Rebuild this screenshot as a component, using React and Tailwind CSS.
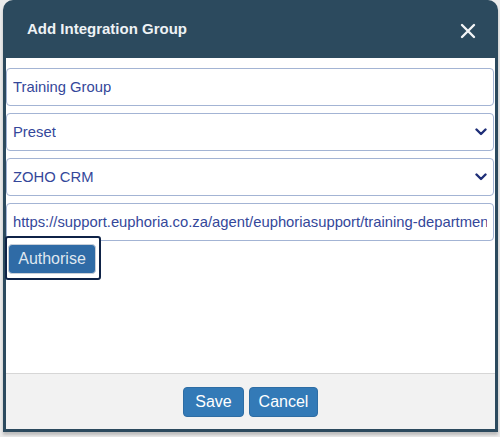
import { useState } from 'react';

function Chevron() {
  return (
    <svg width="12" height="8" viewBox="0 0 12 8" className="shrink-0">
      <polyline points="1.5,1.5 6,6 10.5,1.5" fill="none" stroke="#1f2f78" strokeWidth="2.4" strokeLinecap="round" strokeLinejoin="round" />
    </svg>
  );
}

function Field({ value, select }) {
  return (
    <div className="h-[38px] flex items-center justify-between pl-[6px] pr-[6px] border border-[#a3b4d4] rounded-[4px] bg-white">
      <span className="text-[14.8px] text-[#34479a] whitespace-nowrap overflow-hidden">{value}</span>
      {select && <Chevron />}
    </div>
  );
}

export default function App() {
  const [name] = useState('Training Group');

  return (
    <div className="w-[500px] h-[437px] bg-[#ebebeb] pl-[3px] pr-[2px]" style={{ fontFamily: '"Liberation Sans", Arial, sans-serif' }}>
      <div className="w-[495px] flex flex-col rounded-t-[10px] bg-[#2c4a5e] shadow-[0_3px_3px_rgba(0,0,0,0.2)]">
        {/* Header */}
        <div className="h-[58px] flex items-center justify-between pl-[24px] pr-[22px]">
          <h2 className="text-[15px] font-bold text-[#eef2f5]">Add Integration Group</h2>
          <svg width="16" height="16" viewBox="0 0 16 16" className="mt-[3px]">
            <path d="M2 2 L14 14 M14 2 L2 14" stroke="#f3f5f7" strokeWidth="2.4" strokeLinecap="round" />
          </svg>
        </div>

        <div className="mx-[3px] mb-[3px] flex flex-col">
          {/* Body */}
          <div className="h-[315px] bg-white pt-[10px] pr-[1px]">
            <div className="flex flex-col gap-[7px]">
              <Field value={name} />
              <Field value="Preset" select />
              <Field value="ZOHO CRM" select />
              <Field value="https://support.euphoria.co.za/agent/euphoriasupport/training-department" />
            </div>
            <div className="relative -mt-[5px] ml-[-1px] w-[96px] h-[44px] border-2 border-[#0f2347] rounded-[3px] pt-[6px] pl-[1px] bg-white">
              <button className="w-[88px] h-[30px] rounded-[4px] bg-[#2f6ba6] border border-[#c9d0d9] text-[16px] text-[#dfe7f0]">
                Authorise
              </button>
            </div>
          </div>

          {/* Footer */}
          <div className="h-[56px] bg-[#f2f2f2] border-t border-[#d6d6d6] flex items-center justify-center gap-[5px] pt-[1px]">
            <button className="w-[61px] h-[30px] rounded-[4px] bg-[#337ab7] border border-[#2e6da4] text-[16px] text-white">Save</button>
            <button className="w-[69px] h-[30px] rounded-[4px] bg-[#337ab7] border border-[#2e6da4] text-[16px] text-white">Cancel</button>
          </div>
        </div>
      </div>
    </div>
  );
}
